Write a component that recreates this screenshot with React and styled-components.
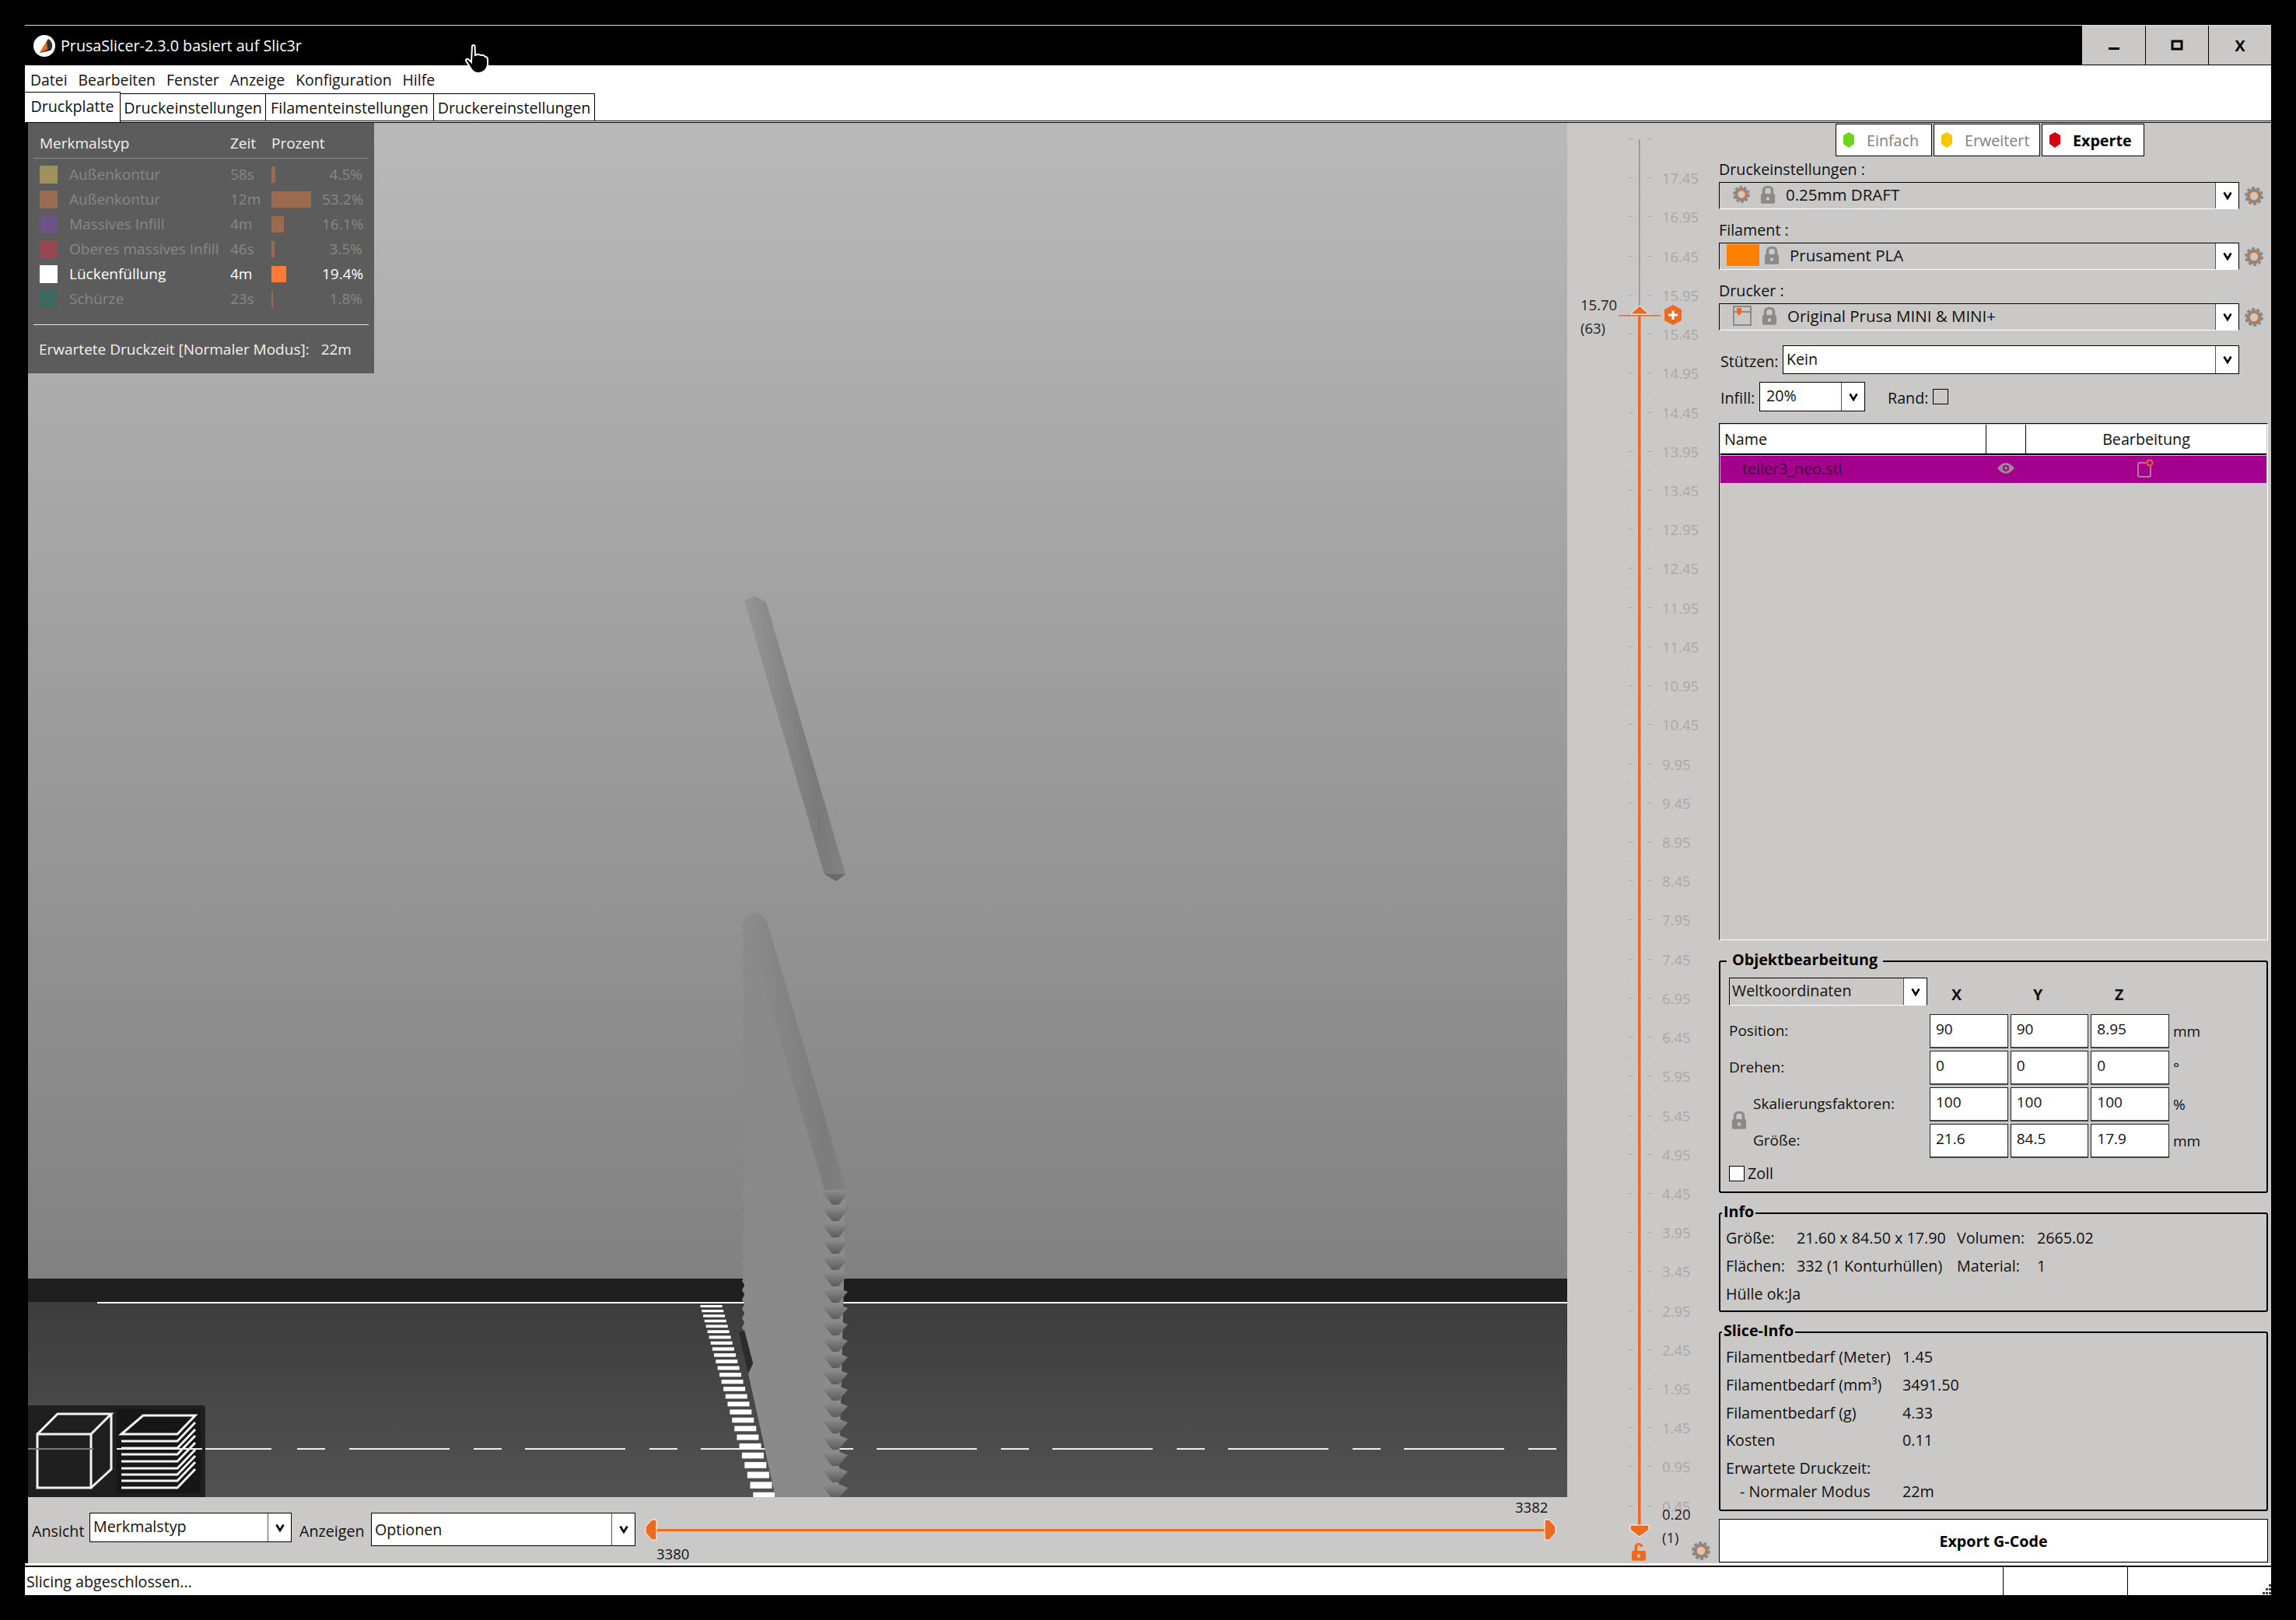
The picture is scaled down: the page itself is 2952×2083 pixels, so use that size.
import React from 'react';
import styled, { createGlobalStyle } from 'styled-components';

const FONT = '"Open Sans", "Noto Sans", sans-serif';
const PANEL = '#cbc9c7';
const ORANGE = '#ed6b21';

const GlobalStyle = createGlobalStyle`
  html, body { margin: 0; padding: 0; background: #000; }
  body { font-family: ${FONT}; font-size: 19.7px; color: #111; }
  * { box-sizing: border-box; }
`;

const Screen = styled.div`
  width: 2952px;
  height: 2083px;
  padding: 32px 32px 0;
  background: #000;
  overflow: hidden;
`;

const Frame = styled.div`
  width: 2888px;
  display: flex;
  flex-direction: column;
  border-top: 1px solid #ddd;
`;

const TitleBar = styled.div`
  height: 51px;
  display: flex;
  align-items: center;
  color: #fff;
  padding-left: 11px;
  gap: 7px;
  position: relative;
`;

const WindowButtons = styled.div`
  margin-left: auto;
  height: 50px;
  align-self: flex-start;
  display: flex;
`;

const WindowButton = styled.div`
  width: 81px;
  background: ${PANEL};
  display: flex;
  align-items: center;
  justify-content: center;
  color: #000;
  font-weight: 700;
  & + & { border-left: 1px solid #000; }
`;

const Cursor = styled.svg`
  position: absolute;
  left: 566px;
  top: 24px;
`;

const MenuBar = styled.div`
  height: 34px;
  background: #fff;
  display: flex;
  align-items: center;
  gap: 14px;
  padding: 2px 0 0 7px;
  font-size: 19.4px;
`;

const TabRow = styled.div`
  height: 39px;
  background: #fff;
  display: flex;
  align-items: flex-start;
  position: relative;
  &::after {
    content: '';
    position: absolute;
    left: 123px;
    right: 0;
    top: 37px;
    height: 1px;
    background: #000;
  }
`;

const Tab = styled.div`
  width: ${(p) => p.$w}px;
  height: ${(p) => (p.$active ? 39 : 36)}px;
  margin-top: ${(p) => (p.$active ? 0 : 2)}px;
  border: 1px solid #000;
  border-width: ${(p) => (p.$active ? '1px 1px 0 0' : '1px 1px 1px 0')};
  display: flex;
  align-items: center;
  justify-content: center;
  background: #fff;
  position: relative;
  z-index: 1;
  white-space: nowrap;
  padding-bottom: ${(p) => (p.$active ? 3 : 0)}px;
`;

const Main = styled.div`
  height: 1853px;
  display: flex;
  background: #000;
  padding: 1px 0 0 4px;
`;

const LeftColumn = styled.div`
  width: 1979px;
  display: flex;
  flex-direction: column;
`;

const Viewport = styled.div`
  height: 1767px;
  position: relative;
  background: linear-gradient(#b9b9b9 0, #818181 1486px, #3a3a3a 1486px, #525252 100%);
  overflow: hidden;
`;

const Scene = styled.svg`
  display: block;
  position: absolute;
  inset: 0;
`;

const Legend = styled.div`
  position: absolute;
  left: 0;
  top: 0;
  width: 445px;
  height: 322px;
  background: #5c5c5c;
  color: #f2f2f2;
  padding: 13px 7px 0;
  font-size: 19px;
`;

const LegendRow = styled.div`
  display: grid;
  grid-template-columns: 23px 222px 53px 65px 1fr;
  height: 32px;
  align-items: center;
  padding-left: 8px;
  color: ${(p) => (p.$on ? '#fff' : '#888888')};
`;

const LegendHead = styled(LegendRow)`
  height: 26px;
  color: #f2f2f2;
  white-space: nowrap;
`;

const HeadName = styled.span`
  grid-column: 1 / 3;
`;

const Swatch = styled.span`
  width: 23px;
  height: 23px;
  background: ${(p) => p.$c};
`;

const RowLabel = styled.span`
  padding-left: 15px;
  white-space: nowrap;
`;

const TimeCell = styled.span`
  white-space: nowrap;
`;

const BarCell = styled.span`
  display: block;
  height: 21px;
  background: ${(p) => (p.$on ? '#ff7a35' : '#9b6a4f')};
`;

const PctCell = styled.span`
  text-align: right;
  padding-right: 8px;
`;

const OrangeRule = styled.div`
  height: 1px;
  background: ${ORANGE};
  margin: 6px 0 4px;
`;

const WhiteRule = styled.div`
  height: 1px;
  background: #e8e8e8;
  margin: 17px 0 18px;
`;

const LegendFoot = styled.div`
  padding-left: 7px;
  white-space: nowrap;
  display: flex;
  gap: 15px;
`;

const Gizmo = styled.div`
  position: absolute;
  left: 0;
  bottom: 0;
  width: 228px;
  height: 118px;
  background: #1f1f1f;
  border-top-right-radius: 4px;
`;

const GizmoArt = styled.svg`
  display: block;
`;

const BottomBar = styled.div`
  height: 85px;
  background: ${PANEL};
  display: flex;
  align-items: flex-start;
  padding: 20px 0 0 5px;
`;

const BarLabel = styled.span`
  width: ${(p) => p.$w}px;
  flex: none;
  margin-top: 10px;
  white-space: nowrap;
`;

const Combo = styled.div`
  width: ${(p) => (p.$w ? `${p.$w}px` : '100%')};
  height: ${(p) => p.$h}px;
  margin-right: ${(p) => p.$mr || 0}px;
  display: flex;
  background: ${(p) => (p.$grey ? PANEL : '#fff')};
  border: 1px solid #000;
  border-bottom: ${(p) => (p.$grey ? '1px solid #fff' : '1px solid #000')};
  flex: none;
  font-size: ${(p) => p.$fs || 19.7}px;
`;

const ComboBody = styled.div`
  flex: 1;
  display: flex;
  align-items: center;
  gap: 13px;
  padding-left: ${(p) => p.$pl ?? 4}px;
  padding-bottom: ${(p) => p.$pb ?? 3}px;
  white-space: nowrap;
  min-width: 0;
`;

const ComboArrow = styled.div`
  width: 30px;
  flex: none;
  background: #fff;
  border-left: 1px solid #555;
  display: flex;
  align-items: center;
  justify-content: center;
`;

const HSlider = styled.div`
  flex: 1;
  position: relative;
  height: 65px;
`;

const HSliderArt = styled.svg`
  position: absolute;
  left: 0;
  top: 0;
`;

const HLabel = styled.span`
  position: absolute;
  left: ${(p) => p.$x}px;
  top: ${(p) => p.$y}px;
  font-size: 18.5px;
`;

const SliderColumn = styled.div`
  width: 185px;
  background: ${PANEL};
  position: relative;
  padding-top: 8px;
  overflow: hidden;
  font-size: 18.5px;
`;

const TickRow = styled.div`
  height: 25.12px;
  display: flex;
  align-items: center;
  padding-left: 79px;
  color: #a9a8a6;
  white-space: nowrap;
`;

const TickMark = styled.span`
  width: ${(p) => (p.$major ? 5 : 2)}px;
  height: 1px;
  background: #a9a8a6;
  margin-right: ${(p) => (p.$major ? 19 : 22)}px;
`;

const TickText = styled.span`
  margin-left: -5px;
`;

const SliderArt = styled.svg`
  position: absolute;
  inset: 0;
`;

const SliderValue = styled.span`
  position: absolute;
  left: ${(p) => p.$x}px;
  top: ${(p) => p.$y}px;
  color: #222;
`;

const SidePanel = styled.div`
  width: 720px;
  background: ${PANEL};
  padding: 1px 4px 0 10px;
  display: flex;
  flex-direction: column;
`;

const ModeRow = styled.div`
  height: 42px;
  margin-left: 150px;
  display: flex;
  gap: 2px;
`;

const ModeButton = styled.div`
  width: ${(p) => p.$w}px;
  background: #fff;
  border: 1px solid #000;
  display: flex;
  align-items: center;
  gap: 15px;
  padding-left: 8px;
  color: ${(p) => (p.$active ? '#000' : '#808080')};
  font-weight: ${(p) => (p.$active ? 700 : 400)};
`;

const Preset = styled.div`
  margin-top: ${(p) => p.$mt}px;
`;

const PresetLabel = styled.div`
  height: 29px;
  padding-bottom: 5px;
  display: flex;
  align-items: center;
`;

const PresetLine = styled.div`
  display: flex;
  align-items: center;
  gap: 7px;
`;

const ColorChip = styled.span`
  width: 42px;
  height: 28px;
  margin-right: -7px;
  background: #ff8000;
`;

const OptionRow = styled.div`
  display: flex;
  align-items: center;
  margin-top: ${(p) => p.$mt}px;
  padding-left: 2px;
`;

const OptionLabel = styled.span`
  width: ${(p) => p.$w}px;
  flex: none;
  padding-top: 3px;
  white-space: nowrap;
`;

const CheckBox = styled.span`
  width: 20px;
  height: 20px;
  flex: none;
  background: ${(p) => (p.$white ? '#fff' : 'transparent')};
  border: 1px solid #000;
`;

const ObjectList = styled.div`
  height: 665px;
  margin-top: 15px;
  border: 1px solid #000;
  border-bottom-color: #fff;
  border-right-color: #fff;
`;

const ListHead = styled.div`
  height: 39px;
  display: grid;
  grid-template-columns: 341px 51px 1fr;
  background: #fff;
  border-bottom: 2px solid #000;
  margin: 1px;
`;

const ListHeadCell = styled.div`
  display: flex;
  align-items: center;
  justify-content: ${(p) => (p.$center ? 'center' : 'flex-start')};
  padding-left: ${(p) => (p.$center ? 0 : 5)}px;
  & + & { border-left: 1px solid #000; }
`;

const ListRow = styled.div`
  height: 35px;
  margin: 0 1px;
  display: grid;
  grid-template-columns: 341px 51px 1fr;
  background: #a5008d;
  color: #3b1238;
  align-items: center;
`;

const ListName = styled.span`
  padding-left: 28px;
  padding-bottom: 2px;
`;

const ListIcon = styled.span`
  display: flex;
  justify-content: center;
  padding-bottom: 3px;
`;

const Group = styled.div`
  position: relative;
  height: ${(p) => p.$h}px;
  margin-top: ${(p) => p.$mt}px;
  border: 2px solid #000;
  border-radius: 3px;
  padding: ${(p) => p.$pad};
`;

const GroupTitle = styled.span`
  position: absolute;
  left: ${(p) => p.$x}px;
  top: -17px;
  padding: 0 ${(p) => p.$px}px;
  background: ${PANEL};
  font-weight: 700;
  color: #000;
  line-height: 27px;
`;

const ObjectGrid = styled.div`
  display: grid;
  grid-template-columns: 31px 227px 308px auto;
  grid-auto-rows: 44px;
  row-gap: 3px;
  margin-top: 11px;
  align-items: center;
  font-size: 19px;
`;

const HeadRow = styled.div`
  display: grid;
  grid-template-columns: 258px 308px;
  height: 36px;
`;

const AxisRow = styled.div`
  display: grid;
  grid-template-columns: repeat(3, 105px);
  align-items: end;
`;

const Axis = styled.span`
  font-weight: 700;
  padding-left: 28px;
  line-height: 26px;
  margin-bottom: 1px;
`;

const FieldLabel = styled.span`
  grid-column: ${(p) => (p.$indent ? '2' : '1 / 3')};
  padding-bottom: 3px;
  white-space: nowrap;
`;

const LockCell = styled.span`
  grid-column: 1;
  grid-row: 3 / 5;
  padding: 30px 0 0 3px;
  align-self: start;
`;

const Trio = styled.div`
  grid-column: 3;
  display: flex;
  gap: 3px;
`;

const NumberBox = styled.div`
  width: 102px;
  height: 44px;
  background: #fff;
  border: 1px solid #222;
  border-bottom: 2px solid #444;
  padding: 5px 0 0 7px;
`;

const Unit = styled.span`
  padding-left: 5px;
  white-space: nowrap;
`;

const ZollRow = styled.div`
  display: flex;
  align-items: center;
  gap: 4px;
  margin-top: 6px;
`;

const InfoGrid = styled.div`
  display: grid;
  grid-template-columns: ${(p) => p.$cols};
  grid-auto-rows: 35.7px;
  align-items: center;
  white-space: nowrap;
`;

const CompactGap = styled.div`
  grid-column: 1;
  padding-left: 18px;
  margin-top: -12px;
`;

const CompactValue = styled.div`
  margin-top: -12px;
`;

const ExportButton = styled.div`
  height: 56px;
  margin-top: 10px;
  background: #fff;
  border: 1px solid #000;
  display: flex;
  align-items: center;
  justify-content: center;
  font-weight: 700;
  color: #000;
`;

const WhiteGap = styled.div`
  height: 3px;
  background: #fff;
`;

const Divider = styled.div`
  height: 2px;
  background: #000;
`;

const StatusBar = styled.div`
  height: 36px;
  background: #fff;
  display: grid;
  grid-template-columns: 2543px 160px 1fr;
  position: relative;
`;

const StatusCell = styled.div`
  padding: 5px 0 0 2px;
  white-space: nowrap;
  & + & { border-left: 1px solid #000; }
`;

const Grip = styled.svg`
  position: absolute;
  right: 0;
  bottom: 0;
`;

const Chevron = () => (
  <svg width="12" height="11" viewBox="0 0 12 11">
    <path d="M1.5 1.5 L6 9 L10.5 1.5" fill="none" stroke="#000" strokeWidth="2.6" />
  </svg>
);

const Lock = ({ color = '#8a8a8a', fillHole = PANEL, open }) => (
  <svg width="20" height="24" viewBox="0 0 22 26">
    <path
      d={open ? 'M5 12 V6 a6 5 0 0 1 12 0 h-4 a2 2 0 0 0 -4 0 V12 z' : 'M3 12 V7 a8 6.5 0 0 1 16 0 V12 h-4 V7 a4 3 0 0 0 -8 0 V12 z'}
      fill={color}
    />
    <rect x="1" y="12" width="20" height="14" rx="2" fill={color} />
    <circle cx="11" cy="19" r="2.4" fill={fillHole} />
  </svg>
);

const Gear = ({ size = 24 }) => (
  <svg width={size} height={size} viewBox="0 0 24 24">
    <circle cx="12" cy="12" r="9.5" fill="#888" />
    <circle cx="12" cy="12" r="10.5" fill="none" stroke="#888" strokeWidth="3" strokeDasharray="4 2.6" />
    <circle cx="12" cy="12" r="6" fill={PANEL} stroke={ORANGE} strokeWidth="1.6" />
  </svg>
);

const ModeDot = ({ color }) => (
  <svg width="16" height="20" viewBox="0 0 16 20">
    <path d="M8 0 L15 4 V15 L8 20 L1 15 V4 z" fill={color} />
  </svg>
);

const Logo = () => (
  <svg width="28" height="28" viewBox="0 0 28 28">
    <circle cx="14" cy="14" r="14" fill="#fff" />
    <path d="M8 23 L19 5 a10 10 0 0 1 3 15 z" fill="#33312f" />
    <path d="M8 23 L17 8 L18 17 z" fill={ORANGE} />
    <path d="M8 23 L13 15 L19 18 z" fill={ORANGE} />
  </svg>
);

const featureRows = [
  { c: '#9f9158', name: 'Außenkontur', time: '58s', pct: '4.5%', bar: 5 },
  { c: '#9b6c50', name: 'Außenkontur', time: '12m', pct: '53.2%', bar: 51 },
  { c: '#6b5289', name: 'Massives Infill', time: '4m', pct: '16.1%', bar: 16 },
  { c: '#97484f', name: 'Oberes massives Infill', time: '46s', pct: '3.5%', bar: 4 },
  { c: '#ffffff', name: 'Lückenfüllung', time: '4m', pct: '19.4%', bar: 19, on: true },
  { c: '#3a6a5f', name: 'Schürze', time: '23s', pct: '1.8%', bar: 2 },
];

const tickRows = [];
for (let i = 0; i < 71; i++) {
  const value = 17.95 - i * 0.25;
  const major = i % 2 === 0;
  tickRows.push({ key: i, major, label: major && i > 0 ? value.toFixed(2) : '' });
}

// bright gap-fill stripes lying on the bed
const stripes = [];
let stripeY = 1677;
while (stripeY < 1922) {
  const t = (stripeY - 1675) / 249;
  const h = 3 + t * 6;
  stripes.push({ y: stripeY, h, x: 900 + t * 70, w: 28 });
  stripeY += h + 3 + t * 2;
}

const teeth = [];
for (let y = 1528; y < 1920; y += 21) teeth.push(y);

const notches = [];
for (let y = 1184; y < 1710; y += 12) notches.push(y);

const dashes = [[260, 89], [382, 36]];
for (let k = 0; k < 7; k++) {
  dashes.push([449 + 226 * k, 129]);
  dashes.push([609 + 226 * k, 36]);
}

const Bed = () => (
  <Scene width="1979" height="1767" viewBox="36 157 1979 1767">
    <defs>
      <linearGradient id="ridge" x1="0" y1="0" x2="1" y2="-0.2">
        <stop offset="0" stopColor="#959595" />
        <stop offset="0.55" stopColor="#7a7a7a" />
        <stop offset="1" stopColor="#8a8a8a" />
      </linearGradient>
      <linearGradient id="band" x1="0" y1="0" x2="1" y2="-0.2">
        <stop offset="0" stopColor="#8c8c8c" />
        <stop offset="0.6" stopColor="#7c7c7c" />
        <stop offset="1" stopColor="#868686" />
      </linearGradient>
      <linearGradient id="tooth" x1="0" y1="0" x2="0" y2="1">
        <stop offset="0" stopColor="#909090" />
        <stop offset="1" stopColor="#5c5c5c" />
      </linearGradient>
    </defs>
    <rect x="36" y="1643" width="1979" height="30" fill="#1f1f1f" />
    <rect x="125" y="1673" width="1890" height="2" fill="#fff" />
    {dashes.map(([x, w]) => (
      <rect key={x} x={x} y="1861" width={w} height="2" fill="#eee" />
    ))}
    {stripes.map((s) => (
      <rect key={s.y} x={s.x} y={s.y} width={s.w} height={s.h} fill="#fff" />
    ))}
    <polygon points="957,772 970,765 985,773 1087,1123 1075,1132 1060,1123" fill="url(#ridge)" />
    <polygon points="1060,1123 1087,1123 1075,1132" fill="#6a6a6a" />
    <polygon
      points="957,1178 972,1172 985,1181 1088,1528 1078,1924 1008,1924 997,1924 962,1765 968,1752 957,1709"
      fill="#8a8a8a"
    />
    <polygon points="957,1178 972,1172 985,1181 1088,1528 1060,1530" fill="url(#band)" />
    <polygon points="957,1710 968,1752 962,1765 950,1712" fill="#2b2b2b" />
    {notches.map((y) => (
      <polygon key={y} points={`957,${y} 954,${y + 6} 957,${y + 11}`} fill="#8a8a8a" />
    ))}
    {teeth.map((y) => (
      <polygon key={y} points={`1058,${y + 5} 1075,${y} 1090,${y + 6} 1078,${y + 20} 1070,${y + 20}`} fill="url(#tooth)" />
    ))}
  </Scene>
);

const CubeIcons = () => (
  <GizmoArt width="228" height="118" viewBox="36 1806 228 118">
    <rect x="150" y="1811" width="108" height="108" fill="#161616" />
    <g fill="none" stroke="#f2f2f2" strokeWidth="3">
      <rect x="48" y="1843" width="69" height="69" />
      <path d="M48 1843 L74 1817 H143 L117 1843 M143 1817 V1888 L117 1912" />
      <path d="M156 1843 L184 1819 H251 L228 1843 z" />
      {[1852, 1861, 1869, 1878, 1887, 1895, 1903, 1912].map((y) => (
        <path key={y} d={`M156 ${y} H228 L251 ${y - 24}`} />
      ))}
    </g>
    <rect x="36" y="1861" width="84" height="2" fill="#777" />
    <rect x="150" y="1861" width="110" height="2" fill="#eee" />
  </GizmoArt>
);

const VerticalSlider = () => (
  <SliderArt width="185" height="1852" viewBox="2015 157 185 1852">
    <rect x="2107" y="178" width="1.5" height="215" fill="#8d8d8d" />
    <rect x="2106" y="404" width="3.5" height="1556" fill={ORANGE} />
    <rect x="2081" y="404" width="54" height="1.5" fill={ORANGE} />
    <path d="M2096 403 L2108 392 L2120 403 z" fill={ORANGE} stroke="#fff" strokeWidth="1" />
    <path d="M2151 391 L2162 397 V411 L2151 417 L2140 411 V397 z" fill={ORANGE} />
    <path d="M2145 404 H2157 M2151 398 V410" stroke="#fff" strokeWidth="3" />
    <path d="M2096 1960 H2120 V1966 L2108 1975 L2096 1966 z" fill={ORANGE} stroke="#fff" strokeWidth="1" />
  </SliderArt>
);

const App = () => {
  return (
    <Screen>
      <GlobalStyle />
      <Frame>
        <TitleBar>
          <Logo />
          <span>PrusaSlicer-2.3.0 basiert auf Slic3r</span>
          <Cursor width="30" height="38" viewBox="0 0 30 38">
            <path
              d="M9 2 Q11 0 12.5 2 L13 14 Q17 12 20 14 Q24 13 26 16 Q29 16 29 20 V27 Q27 36 18 37 Q11 37 8 32 L1 21 Q1 18 4 19 L8 23 z"
              fill="#000"
              stroke="#fff"
              strokeWidth="2"
            />
          </Cursor>
          <WindowButtons>
            <WindowButton>
              <svg width="16" height="16" viewBox="0 0 16 16"><rect x="1" y="11" width="14" height="3" fill="#000" /></svg>
            </WindowButton>
            <WindowButton>
              <svg width="16" height="16" viewBox="0 0 16 16"><rect x="2" y="3" width="12" height="10" fill="none" stroke="#000" strokeWidth="3" /></svg>
            </WindowButton>
            <WindowButton>X</WindowButton>
          </WindowButtons>
        </TitleBar>
        <MenuBar>
          <span>Datei</span>
          <span>Bearbeiten</span>
          <span>Fenster</span>
          <span>Anzeige</span>
          <span>Konfiguration</span>
          <span>Hilfe</span>
        </MenuBar>
        <TabRow>
          <Tab $w={123} $active>Druckplatte</Tab>
          <Tab $w={187}>Druckeinstellungen</Tab>
          <Tab $w={216}>Filamenteinstellungen</Tab>
          <Tab $w={207}>Druckereinstellungen</Tab>
        </TabRow>
        <Main>
          <LeftColumn>
            <Viewport>
              <Bed />
              <Legend>
                <LegendHead>
                  <HeadName>Merkmalstyp</HeadName>
                  <TimeCell>Zeit</TimeCell>
                  <span>Prozent</span>
                  <span />
                </LegendHead>
                <OrangeRule />
                {featureRows.map((row, i) => (
                  <LegendRow key={i} $on={row.on}>
                    <Swatch $c={row.c} />
                    <RowLabel>{row.name}</RowLabel>
                    <TimeCell>{row.time}</TimeCell>
                    <span>
                      <BarCell $on={row.on} style={{ width: row.bar }} />
                    </span>
                    <PctCell>{row.pct}</PctCell>
                  </LegendRow>
                ))}
                <WhiteRule />
                <LegendFoot>
                  <span>Erwartete Druckzeit [Normaler Modus]:</span>
                  <span>22m</span>
                </LegendFoot>
              </Legend>
              <Gizmo>
                <CubeIcons />
              </Gizmo>
            </Viewport>
            <BottomBar>
              <BarLabel $w={74}>Ansicht</BarLabel>
              <Combo $w={260} $h={38} $mr={10}>
                <ComboBody $pb={4}>Merkmalstyp</ComboBody>
                <ComboArrow><Chevron /></ComboArrow>
              </Combo>
              <BarLabel $w={92}>Anzeigen</BarLabel>
              <Combo $w={340} $h={43}>
                <ComboBody $pb={0}>Optionen</ComboBody>
                <ComboArrow><Chevron /></ComboArrow>
              </Combo>
              <HSlider>
                <HSliderArt width="1197" height="65" viewBox="817 1944 1197 65">
                  <rect x="840" y="1965" width="1150" height="3" fill={ORANGE} />
                  <path d="M844 1953 V1979 H838 L830 1970 V1962 L838 1953 z" fill={ORANGE} stroke="#fff" strokeWidth="1" />
                  <path d="M1986 1953 V1979 H1992 L2000 1970 V1962 L1992 1953 z" fill={ORANGE} stroke="#fff" strokeWidth="1" />
                </HSliderArt>
                <HLabel $x={27} $y={40}>3380</HLabel>
                <HLabel $x={1131} $y={-20}>3382</HLabel>
              </HSlider>
            </BottomBar>
          </LeftColumn>
          <SliderColumn>
            {tickRows.map((tick) => (
              <TickRow key={tick.key}>
                <TickMark $major={tick.major} />
                <TickMark $major={tick.major} />
                <TickText>{tick.label}</TickText>
              </TickRow>
            ))}
            <VerticalSlider />
            <SliderValue $x={17} $y={221}>15.70</SliderValue>
            <SliderValue $x={17} $y={251}>(63)</SliderValue>
            <SliderValue $x={122} $y={1776}>0.20</SliderValue>
            <SliderValue $x={122} $y={1806}>(1)</SliderValue>
            <SliderValue $x={82} $y={1825}><Lock color={ORANGE} open /></SliderValue>
            <SliderValue $x={160} $y={1824}><Gear /></SliderValue>
          </SliderColumn>
          <SidePanel>
            <ModeRow>
              <ModeButton $w={124}><ModeDot color="#6fd41e" />Einfach</ModeButton>
              <ModeButton $w={137}><ModeDot color="#f7c800" />Erweitert</ModeButton>
              <ModeButton $w={132} $active><ModeDot color="#d90013" />Experte</ModeButton>
            </ModeRow>
            <Preset $mt={4}>
              <PresetLabel>Druckeinstellungen :</PresetLabel>
              <PresetLine>
                <Combo $w={669} $h={35} $grey $fs={20.5}>
                  <ComboBody $pl={17}>
                    <Gear size={22} />
                    <Lock />
                    0.25mm DRAFT
                  </ComboBody>
                  <ComboArrow><Chevron /></ComboArrow>
                </Combo>
                <Gear />
              </PresetLine>
            </Preset>
            <Preset $mt={14}>
              <PresetLabel>Filament :</PresetLabel>
              <PresetLine>
                <Combo $w={669} $h={35} $grey $fs={20.5}>
                  <ComboBody $pl={9}>
                    <ColorChip />
                    <Lock />
                    Prusament PLA
                  </ComboBody>
                  <ComboArrow><Chevron /></ComboArrow>
                </Combo>
                <Gear />
              </PresetLine>
            </Preset>
            <Preset $mt={14}>
              <PresetLabel>Drucker :</PresetLabel>
              <PresetLine>
                <Combo $w={669} $h={35} $grey $fs={20.5}>
                  <ComboBody $pl={17}>
                    <svg width="24" height="26" viewBox="0 0 24 26">
                      <rect x="1" y="1" width="22" height="24" fill="none" stroke="#8a8a8a" strokeWidth="2" />
                      <path d="M1 8 H23" stroke="#8a8a8a" strokeWidth="2" />
                      <path d="M5 3 H11 V9 L8 13 L5 9 z" fill={ORANGE} />
                    </svg>
                    <Lock />
                    Original Prusa MINI &amp; MINI+
                  </ComboBody>
                  <ComboArrow><Chevron /></ComboArrow>
                </Combo>
                <Gear />
              </PresetLine>
            </Preset>
            <OptionRow $mt={19}>
              <OptionLabel $w={80}>Stützen:</OptionLabel>
              <Combo $w={587} $h={37}>
                <ComboBody>Kein</ComboBody>
                <ComboArrow><Chevron /></ComboArrow>
              </Combo>
            </OptionRow>
            <OptionRow $mt={10}>
              <OptionLabel $w={50}>Infill:</OptionLabel>
              <Combo $w={136} $h={38} $mr={29}>
                <ComboBody $pl={8}>20%</ComboBody>
                <ComboArrow><Chevron /></ComboArrow>
              </Combo>
              <OptionLabel $w={58}>Rand:</OptionLabel>
              <CheckBox />
            </OptionRow>
            <ObjectList>
              <ListHead>
                <ListHeadCell>Name</ListHeadCell>
                <ListHeadCell />
                <ListHeadCell $center>Bearbeitung</ListHeadCell>
              </ListHead>
              <ListRow>
                <ListName>teiler3_neo.stl</ListName>
                <ListIcon>
                  <svg width="24" height="16" viewBox="0 0 24 16">
                    <path d="M1 8 Q12 -6 23 8 Q12 22 1 8 z" fill="#9a8a98" />
                    <circle cx="12" cy="8" r="4" fill="#a5008d" />
                    <circle cx="12" cy="8" r="2" fill="#9a8a98" />
                  </svg>
                </ListIcon>
                <ListIcon>
                  <svg width="24" height="24" viewBox="0 0 24 24">
                    <rect x="2" y="5" width="16" height="18" rx="2" fill="none" stroke="#b07aa8" strokeWidth="2" />
                    <circle cx="17" cy="5" r="5" fill="#a5008d" />
                    <circle cx="17" cy="5" r="3.5" fill="none" stroke={ORANGE} strokeWidth="2" />
                  </svg>
                </ListIcon>
              </ListRow>
            </ObjectList>
            <Group $h={299} $mt={26} $pad="20px 0 0 11px">
              <GroupTitle $x={8} $px={7}>Objektbearbeitung</GroupTitle>
              <HeadRow>
                <Combo $w={255} $h={36} $grey>
                  <ComboBody $pl={3}>Weltkoordinaten</ComboBody>
                  <ComboArrow><Chevron /></ComboArrow>
                </Combo>
                <AxisRow>
                  <Axis>X</Axis>
                  <Axis>Y</Axis>
                  <Axis>Z</Axis>
                </AxisRow>
              </HeadRow>
              <ObjectGrid>
                <FieldLabel>Position:</FieldLabel>
                <Trio>
                  <NumberBox>90</NumberBox>
                  <NumberBox>90</NumberBox>
                  <NumberBox>8.95</NumberBox>
                </Trio>
                <Unit>mm</Unit>
                <FieldLabel>Drehen:</FieldLabel>
                <Trio>
                  <NumberBox>0</NumberBox>
                  <NumberBox>0</NumberBox>
                  <NumberBox>0</NumberBox>
                </Trio>
                <Unit>°</Unit>
                <LockCell><Lock /></LockCell>
                <FieldLabel $indent>Skalierungsfaktoren:</FieldLabel>
                <Trio>
                  <NumberBox>100</NumberBox>
                  <NumberBox>100</NumberBox>
                  <NumberBox>100</NumberBox>
                </Trio>
                <Unit>%</Unit>
                <FieldLabel $indent>Größe:</FieldLabel>
                <Trio>
                  <NumberBox>21.6</NumberBox>
                  <NumberBox>84.5</NumberBox>
                  <NumberBox>17.9</NumberBox>
                </Trio>
                <Unit>mm</Unit>
              </ObjectGrid>
              <ZollRow>
                <CheckBox $white />
                <span>Zoll</span>
              </ZollRow>
            </Group>
            <Group $h={128} $mt={25} $pad="13px 0 0 7px">
              <GroupTitle $x={2} $px={2}>Info</GroupTitle>
              <InfoGrid $cols="91px 206px 103px auto">
                <span>Größe:</span>
                <span>21.60 x 84.50 x 17.90</span>
                <span>Volumen:</span>
                <span>2665.02</span>
                <span>Flächen:</span>
                <span>332 (1 Konturhüllen)</span>
                <span>Material:</span>
                <span>1</span>
                <span>Hülle ok:Ja</span>
              </InfoGrid>
            </Group>
            <Group $h={231} $mt={25} $pad="13px 0 0 7px">
              <GroupTitle $x={2} $px={2}>Slice-Info</GroupTitle>
              <InfoGrid $cols="227px auto">
                <span>Filamentbedarf (Meter)</span>
                <span>1.45</span>
                <span>Filamentbedarf (mm³)</span>
                <span>3491.50</span>
                <span>Filamentbedarf (g)</span>
                <span>4.33</span>
                <span>Kosten</span>
                <span>0.11</span>
                <span>Erwartete Druckzeit:</span>
                <span />
                <CompactGap>- Normaler Modus</CompactGap>
                <CompactValue>22m</CompactValue>
              </InfoGrid>
            </Group>
            <ExportButton>Export G-Code</ExportButton>
          </SidePanel>
        </Main>
        <WhiteGap />
        <Divider />
        <StatusBar>
          <StatusCell>Slicing abgeschlossen...</StatusCell>
          <StatusCell />
          <StatusCell />
          <Grip width="12" height="14" viewBox="0 0 12 14">
            <path d="M9 0h3v3H9z M5 5h3v3H5z M9 5h3v3H9z M1 10h3v3H1z M5 10h3v3H5z M9 10h3v3H9z" fill="#444" />
          </Grip>
        </StatusBar>
      </Frame>
    </Screen>
  );
};

export default App;
